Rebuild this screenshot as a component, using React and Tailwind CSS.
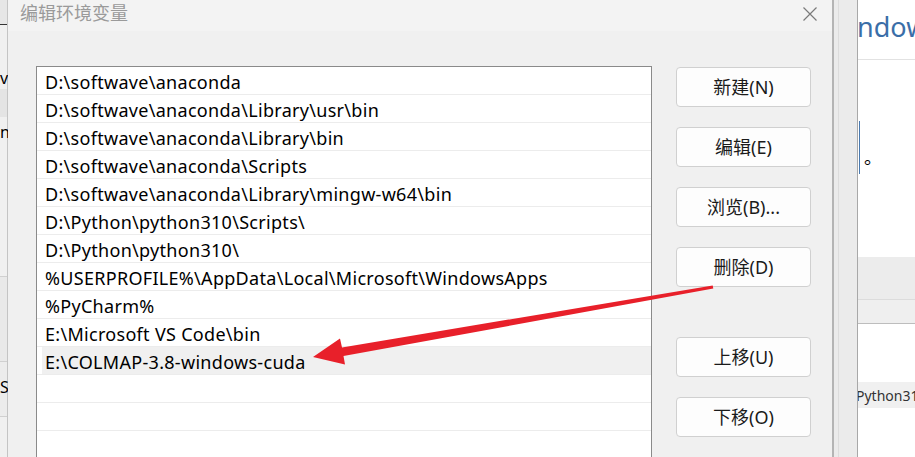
import React from "react";

const paths = [
    "D:\\softwave\\anaconda",
    "D:\\softwave\\anaconda\\Library\\usr\\bin",
    "D:\\softwave\\anaconda\\Library\\bin",
    "D:\\softwave\\anaconda\\Scripts",
    "D:\\softwave\\anaconda\\Library\\mingw-w64\\bin",
    "D:\\Python\\python310\\Scripts\\",
    "D:\\Python\\python310\\",
    "%USERPROFILE%\\AppData\\Local\\Microsoft\\WindowsApps",
    "%PyCharm%",
    "E:\\Microsoft VS Code\\bin",
    "E:\\COLMAP-3.8-windows-cuda",
    "",
    "",
    "",
];

const selected = 10;

const font = {fontFamily: '"Noto Sans", "Noto Sans CJK SC", sans-serif'};

const Button = ({label, className = ""}) => (
    <button
        type="button"
        className={"h-[40px] w-[135px] rounded-[4px] border border-[#d0d0d0] bg-[#fdfdfd] text-[18px] leading-none text-[#1a1a1a] " + className}
    >
        {label}
    </button>
);

const App = () => {
    return (
        <div className="relative flex h-[457px] w-[915px] overflow-hidden bg-[#f0f0f0]" style={font}>
            {/* left background window slice */}
            <div className="flex w-[8px] shrink-0 flex-col border-r border-[#c4c4c4] bg-[#f0f0f0] text-[16px] text-black">
                <div className="h-[25px] border-b border-[#333] bg-[#e6e6e6]"></div>
                <div className="mt-[42px] h-[22px] leading-[22px]">v</div>
                <div className="h-[28px] bg-[#e4e4e4]"></div>
                <div className="h-[30px] leading-[30px]">n</div>
                <div className="mt-[129px] h-[85px] border-t border-[#d0d0d0] bg-[#e9e9e9]"></div>
                <div className="h-[55px] border-t border-[#d0d0d0] bg-[#ececec] pt-[14px] leading-[22px]">S</div>
                <div className="flex-1 border-t border-[#d0d0d0]"></div>
            </div>

            {/* dialog */}
            <div className="flex w-[826px] shrink-0 flex-col border-r-2 border-[#b4b4b4] bg-[#f0f0f0]">
                <div className="flex h-[36px] items-center justify-between bg-[#f3f3f3] pb-[4px] pl-[12px] pr-[14px]">
                    <span className="text-[18px] text-[#9a9a9a]">编辑环境变量</span>
                    <svg width="16" height="16" viewBox="0 0 16 16">
                        <path d="M1.5 1.5 L14.5 14.5 M14.5 1.5 L1.5 14.5" stroke="#7a7a7a" strokeWidth="1.2" fill="none"/>
                    </svg>
                </div>
                <div className="flex pl-[28px] pt-[35px]">
                    <div className="w-[616px] border border-[#8a8a8a] bg-white">
                        {paths.map((p, i) => (
                            <div key={i} className="flex h-[28px] border-b border-[#ececec]">
                                <div
                                    className={"ml-[5px] flex flex-1 items-center pl-[3px] pt-[3px] text-[18px] leading-none tracking-[0.3px] text-black " + (i === selected ? "bg-[#f0f0f0]" : "")}
                                >
                                    {p}
                                </div>
                            </div>
                        ))}
                    </div>
                    <div className="ml-[24px] flex flex-col pt-[1px]">
                        <Button label="新建(N)"/>
                        <Button label="编辑(E)" className="mt-[20px]"/>
                        <Button label="浏览(B)..." className="mt-[20px]"/>
                        <Button label="删除(D)" className="mt-[20px]"/>
                        <Button label="上移(U)" className="mt-[50px]"/>
                        <Button label="下移(O)" className="mt-[20px]"/>
                    </div>
                </div>
            </div>

            {/* gap between windows */}
            <div className="flex w-[23px] shrink-0 bg-[#ebebeb]">
                <div className="ml-[4px] w-px bg-[#dcdcdc]"></div>
            </div>

            {/* right background window slice */}
            <div className="flex flex-1 flex-col overflow-hidden border-l border-[#a8a8a8] bg-white">
                <div className="flex h-[60px] items-center border-b border-[#e2e2e2] pb-[4px]">
                    <span className="ml-[-33px] whitespace-nowrap text-[27px] text-[#3a6ea8]">Windows</span>
                </div>
                <div className="flex h-[197px] pt-[61px]">
                    <div className="ml-px h-[53px] w-px bg-[#4a7ab0]"></div>
                    <span className="ml-[4px] mt-[26px] text-[18px] leading-[20px] text-black">。</span>
                </div>
                <div className="h-[43px] border-b border-[#dcdcdc] bg-[#ececec]"></div>
                <div className="h-[24px] border-b border-[#bdbdbd] bg-[#efefef]"></div>
                <div className="mt-[58px] flex h-[26px] items-center bg-[#f0f0f0] text-[14px] text-[#333]">
                    <span className="ml-[-2px] whitespace-nowrap">Python310</span>
                </div>
            </div>

            {/* red annotation arrow */}
            <svg className="pointer-events-none absolute left-0 top-0" width="915" height="457" viewBox="0 0 915 457">
                <polygon
                    fill="#e8202a"
                    points="713.3,288.6 712.7,285.4 342,347.5 340,338.5 313,357 345,364.5 343.5,356"
                />
            </svg>
        </div>
    );
};

export default App;
